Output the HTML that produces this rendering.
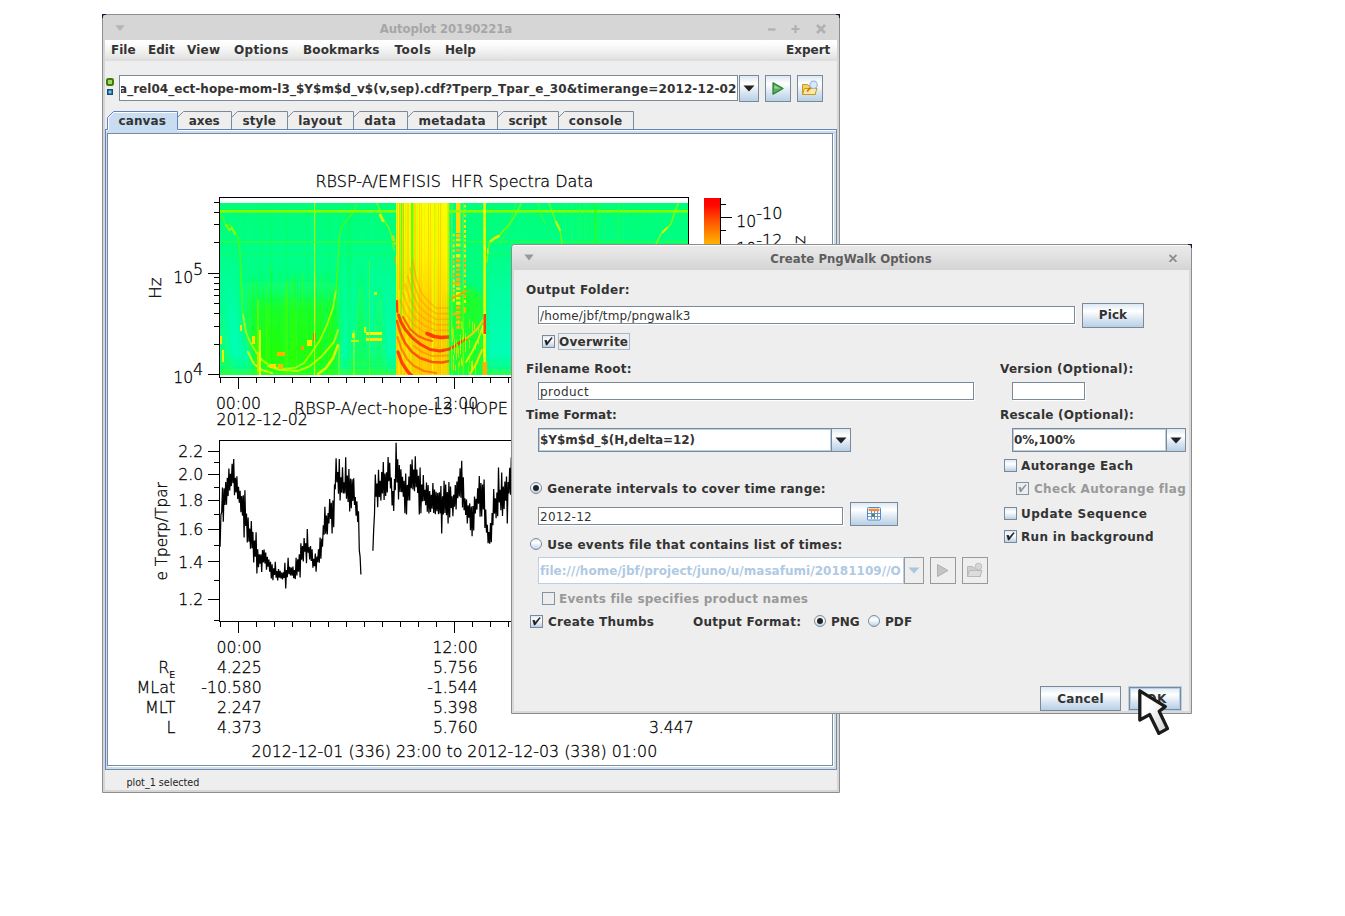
<!DOCTYPE html>
<html lang="en">
<head>
<meta charset="utf-8">
<title>Autoplot 20190221a - Create PngWalk Options</title>
<style>
html,body{margin:0;padding:0;background:#fff;}
body{width:1345px;height:916px;position:relative;overflow:hidden;font-family:"DejaVu Sans","Liberation Sans",sans-serif;font-size:12px;color:#333;}
.a{position:absolute;box-sizing:border-box;}
.t{position:absolute;white-space:nowrap;font-weight:bold;font-size:12px;line-height:14px;height:14px;color:#333;}
.r{font-weight:normal;}
.dis{color:#999;}
.win{position:absolute;box-sizing:border-box;background:#d6d6d6;border:1px solid #8e8e8e;}
.tf{position:absolute;box-sizing:border-box;background:#fff;border:1px solid #7a8a99;box-shadow:1px 1px 0 0 #fff;}
.cbx{position:absolute;box-sizing:border-box;background:#fff;border:1px solid #7a8a99;box-shadow:inset 0 0 0 1px #b8cfe5;}
.tf .t{font-weight:normal;}
.btn{position:absolute;box-sizing:border-box;border:1px solid #7a8a99;background:linear-gradient(#dde8f3 0%,#fff 30%,#fff 32%,#dde8f3 62%,#b8cfe5 100%);}
.btn.dis{border-color:#999;background:#eee;}
.cb{position:absolute;box-sizing:border-box;width:13px;height:13px;border:1px solid #7a8a99;background:linear-gradient(#dde8f3 0%,#fff 35%,#dde8f3 70%,#b8cfe5 100%);}
.cb.dis{border-color:#8493a2;background:#eee;}
.rb{position:absolute;box-sizing:border-box;width:12px;height:12px;border:1px solid #7a8a99;border-radius:50%;background:linear-gradient(#dde8f3 0%,#fff 35%,#dde8f3 70%,#b8cfe5 100%);}
.tab{position:absolute;box-sizing:border-box;top:111px;height:19px;}
.cv{font-family:"DejaVu Sans Light","DejaVu Sans","Liberation Sans",sans-serif;font-weight:200;}
</style>
</head>
<body>

<!-- ================= MAIN WINDOW ================= -->
<div class="win" id="mainwin" style="left:102px;top:14px;width:738px;height:779px;border-radius:3px 3px 0 0;">
</div>
<!-- corner marks -->
<svg class="a" style="left:102px;top:14px" width="4" height="4"><path d="M0 0 H4 V1 H2.2 Q1 1 1 2.2 V4 H0 Z" fill="#0c1c44"/></svg>
<svg class="a" style="left:836px;top:14px" width="4" height="4"><path d="M4 0 H0 V1 H1.8 Q3 1 3 2.2 V4 H4 Z" fill="#0c1c44"/></svg>
<!-- title bar -->
<svg class="a" style="left:115px;top:25px" width="10" height="7"><path d="M0.3 0.3 L9.7 0.3 L5 6 Z" fill="#b4b4b4"/></svg>
<div class="t" style="left:379px;top:22px;width:134px;text-align:center;color:#a6a6a6;font-size:13px;font-family:'DejaVu Sans Condensed','DejaVu Sans',sans-serif;letter-spacing:-0.1px;" id="maintitle">Autoplot 20190221a</div>
<svg class="a" style="left:764px;top:22px" width="70" height="14">
<path d="M4 7.5 H11.5" stroke="#b0b0b0" stroke-width="2.2" fill="none"/>
<path d="M27.5 7 H35.5 M31.5 3 V11" stroke="#b0b0b0" stroke-width="2.2" fill="none"/>
<path d="M53 3 L61 11 M61 3 L53 11" stroke="#b0b0b0" stroke-width="2.6" fill="none"/>
</svg>
<!-- menubar -->
<div class="a" style="left:105px;top:40px;width:732px;height:21px;background:linear-gradient(#fff 0%,#fdfdfd 20%,#e2e2e2 92%,#d0d0d0 96%,#f4f4f4 100%);"></div>
<div class="t" style="left:111px;top:43px">File</div>
<div class="t" style="left:148px;top:43px">Edit</div>
<div class="t" style="left:187px;top:43px;letter-spacing:0.2px">View</div>
<div class="t" style="left:234px;top:43px;letter-spacing:0.3px">Options</div>
<div class="t" style="left:303px;top:43px;letter-spacing:0.15px">Bookmarks</div>
<div class="t" style="left:394.5px;top:43px;letter-spacing:0.5px">Tools</div>
<div class="t" style="left:445px;top:43px">Help</div>
<div class="t" style="left:786px;top:43px">Expert</div>
<!-- content bg -->
<div class="a" style="left:105px;top:61px;width:732px;height:729px;background:#eee;"></div>

<!-- address bar -->
<svg class="a" style="left:106px;top:78px" width="9" height="21">
<rect x="1" y="1" width="6" height="6" rx="1.2" fill="#9ad86a" stroke="#3f7d06" stroke-width="2"/>
<rect x="1.75" y="11.75" width="4.5" height="4.5" fill="#7fbfe4" stroke="#0d507c" stroke-width="1.5"/>
</svg>
<div class="cbx" style="left:119px;top:75px;width:619px;height:26px;box-shadow:none;"></div>
<div class="a" style="left:121px;top:77px;width:616px;height:22px;overflow:hidden;"><div class="t" style="left:-2px;top:5px;letter-spacing:0.033px" id="uri">a_rel04_ect-hope-mom-l3_$Y$m$d_v$(v,sep).cdf?Tperp_<span style="letter-spacing:0.13px">Tpar_e_30&amp;timerange=2012-12-02</span></div></div>
<div class="btn" style="left:739px;top:75px;width:20px;height:27px;"></div>
<svg class="a" style="left:743px;top:85px" width="12" height="7"><path d="M0.5 0.5 H11.5 L6 6.5 Z" fill="#222"/></svg>
<div class="btn" style="left:765px;top:75px;width:26px;height:27px;"></div>
<svg class="a" style="left:771px;top:81px" width="14" height="15"><path d="M2 1.8 L12 7.5 L2 13.2 Z" fill="#58b058" stroke="#237d33" stroke-width="1.2" stroke-linejoin="round"/><path d="M3.4 4.2 L9 7.4 L3.4 7.4 Z" fill="#9ad89a"/></svg>
<div class="btn" style="left:797px;top:75px;width:26px;height:27px;"></div>
<svg class="a" style="left:801px;top:80px" width="18" height="17">
<path d="M1.5 4.5 h5 l1.5 1.5 h6.5 v8.5 h-13 z" fill="#f3d264" stroke="#c79a1e" stroke-width="1"/>
<path d="M3.5 8.5 h12.5 l-2 6 h-12.5 z" fill="#fbe9a0" stroke="#c79a1e" stroke-width="1"/>
<path d="M6 11.5 L10.5 6.5" stroke="#e0691a" stroke-width="1.8"/>
<circle cx="12.6" cy="4.8" r="3.7" fill="#d6e8fc" stroke="#a3b9d9" stroke-width="1.2"/>
</svg>


<!-- tabbed pane content border -->
<div class="a" style="left:105px;top:129px;width:732px;height:641px;background:#c8ddf2;border:1px solid #6382bf;border-right-color:#7a8a99;border-bottom-color:#7a8a99;"></div>
<div class="a" style="left:106px;top:130px;width:730px;height:1px;background:#fff;"></div>
<svg class="a" style="left:0;top:0" width="860" height="140" viewBox="0 0 860 140">
<path d="M107.5 133 V117.5 L113.5 111.5 H177.5 V131 H107.5 Z" fill="#c8ddf2"/>
<path d="M108.5 130 V118 L113.9 112.5 H177.0" fill="none" stroke="#fff" stroke-width="1"/>
<path d="M107.5 130 V117.5 L113.5 111.5 H177.5 V129.5" fill="none" stroke="#6382bf" stroke-width="1"/>
<path d="M178.0 129 V117.5 L183.5 111.5 H231.5 V129 Z" fill="#eeeeee"/>
<path d="M177.5 117.5 L183.5 111.5 H231.5 V129" fill="none" stroke="#7a8a99" stroke-width="1"/>
<path d="M232.0 129 V117.5 L237.5 111.5 H287.5 V129 Z" fill="#eeeeee"/>
<path d="M231.5 117.5 L237.5 111.5 H287.5 V129" fill="none" stroke="#7a8a99" stroke-width="1"/>
<path d="M288.0 129 V117.5 L293.5 111.5 H353.5 V129 Z" fill="#eeeeee"/>
<path d="M287.5 117.5 L293.5 111.5 H353.5 V129" fill="none" stroke="#7a8a99" stroke-width="1"/>
<path d="M354.0 129 V117.5 L359.5 111.5 H407.5 V129 Z" fill="#eeeeee"/>
<path d="M353.5 117.5 L359.5 111.5 H407.5 V129" fill="none" stroke="#7a8a99" stroke-width="1"/>
<path d="M408.0 129 V117.5 L413.5 111.5 H497.5 V129 Z" fill="#eeeeee"/>
<path d="M407.5 117.5 L413.5 111.5 H497.5 V129" fill="none" stroke="#7a8a99" stroke-width="1"/>
<path d="M498.0 129 V117.5 L503.5 111.5 H558.5 V129 Z" fill="#eeeeee"/>
<path d="M497.5 117.5 L503.5 111.5 H558.5 V129" fill="none" stroke="#7a8a99" stroke-width="1"/>
<path d="M559.0 129 V117.5 L564.5 111.5 H633.5 V129 Z" fill="#eeeeee"/>
<path d="M558.5 117.5 L564.5 111.5 H633.5 V129" fill="none" stroke="#7a8a99" stroke-width="1"/>
</svg>
<div class="t" style="left:107.2px;top:114px;width:70px;text-align:center;letter-spacing:0.10px">canvas</div>
<div class="t" style="left:177.2px;top:114px;width:54px;text-align:center">axes</div>
<div class="t" style="left:231.2px;top:114px;width:56px;text-align:center;letter-spacing:0.10px">style</div>
<div class="t" style="left:287.2px;top:114px;width:66px;text-align:center;letter-spacing:0.30px">layout</div>
<div class="t" style="left:353.2px;top:114px;width:54px;text-align:center;letter-spacing:0.30px">data</div>
<div class="t" style="left:407.2px;top:114px;width:90px;text-align:center;letter-spacing:0.30px">metadata</div>
<div class="t" style="left:497.2px;top:114px;width:61px;text-align:center">script</div>
<div class="t" style="left:558.2px;top:114px;width:75px;text-align:center;letter-spacing:0.30px">console</div>
<!-- canvas -->
<div class="a" style="left:107px;top:133px;width:726px;height:633px;background:#fff;border:1px solid #7a8a99;box-shadow:1px 1px 0 0 #fff;"></div>

<svg class="a" style="left:0;top:0" width="1345" height="916" viewBox="0 0 1345 916">
<defs><clipPath id="ccanvas"><rect x="108" y="134" width="724" height="631"/></clipPath><clipPath id="clp"><rect x="220" y="441" width="468" height="180"/></clipPath><clipPath id="cband"><rect x="396" y="203" width="53.5" height="172"/></clipPath></defs>
<g clip-path="url(#ccanvas)">
<defs>
<linearGradient id="gbase" x1="0" y1="0" x2="0" y2="1"><stop offset="0" stop-color="#02ff76"/><stop offset="0.3" stop-color="#00ff86"/><stop offset="0.55" stop-color="#00ffa2"/><stop offset="0.85" stop-color="#00ffb6"/><stop offset="0.94" stop-color="#06ff92"/><stop offset="1" stop-color="#2cff58"/></linearGradient>
<linearGradient id="gbowl" x1="0" y1="0" x2="0" y2="1"><stop offset="0" stop-color="#14ff28" stop-opacity="0"/><stop offset="0.35" stop-color="#14ff28" stop-opacity="0.55"/><stop offset="0.7" stop-color="#1cff08" stop-opacity="0.95"/><stop offset="1" stop-color="#2cff00" stop-opacity="1"/></linearGradient>
<linearGradient id="gyel" x1="0" y1="0" x2="0" y2="1"><stop offset="0" stop-color="#f8ff00"/><stop offset="0.3" stop-color="#fff400"/><stop offset="0.5" stop-color="#ffde00"/><stop offset="0.68" stop-color="#ffc800"/><stop offset="1" stop-color="#ffcc00"/></linearGradient>
<linearGradient id="gfade" x1="0" y1="0" x2="0" y2="1"><stop offset="0" stop-color="#fff" stop-opacity="1"/><stop offset="0.55" stop-color="#fff" stop-opacity="0.9"/><stop offset="0.8" stop-color="#fff" stop-opacity="0.25"/><stop offset="1" stop-color="#fff" stop-opacity="0.15"/></linearGradient>
<mask id="mfade"><rect x="390" y="203" width="70" height="172" fill="url(#gfade)"/></mask>
<filter id="b1" x="-20%" y="-20%" width="140%" height="140%"><feGaussianBlur stdDeviation="3"/></filter>
<filter id="b2" x="-30%" y="-30%" width="160%" height="160%"><feGaussianBlur stdDeviation="5"/></filter>
<filter id="b05" x="-20%" y="-20%" width="140%" height="140%"><feGaussianBlur stdDeviation="0.6"/></filter>
<clipPath id="cspec"><rect x="220" y="203" width="468" height="172"/></clipPath>
</defs>
<filter id="bsoft" x="-2%" y="-2%" width="104%" height="104%"><feGaussianBlur stdDeviation="0.45"/></filter>
<g clip-path="url(#cspec)">
<rect x="220" y="203" width="468" height="172" fill="url(#gbase)"/>
<g filter="url(#bsoft)">
<rect x="216" y="199" width="476" height="180" fill="url(#gbase)"/>
<rect x="317.1" y="203.0" width="2.0" height="172.0" fill="#00ffa0" opacity="0.16"/>
<rect x="241.7" y="203.0" width="4.0" height="172.0" fill="#10ff50" opacity="0.12"/>
<rect x="237.4" y="203.0" width="4.0" height="172.0" fill="#10ff50" opacity="0.08"/>
<rect x="350.1" y="203.0" width="2.0" height="172.0" fill="#10ff50" opacity="0.09"/>
<rect x="347.4" y="203.0" width="4.0" height="172.0" fill="#10ff50" opacity="0.19"/>
<rect x="409.2" y="203.0" width="4.0" height="172.0" fill="#10ff50" opacity="0.15"/>
<rect x="339.0" y="203.0" width="2.0" height="172.0" fill="#10ff50" opacity="0.15"/>
<rect x="260.0" y="203.0" width="3.0" height="172.0" fill="#10ff50" opacity="0.14"/>
<rect x="391.3" y="203.0" width="4.0" height="172.0" fill="#10ff50" opacity="0.09"/>
<rect x="391.4" y="203.0" width="2.0" height="172.0" fill="#00ffa0" opacity="0.09"/>
<rect x="433.6" y="203.0" width="4.0" height="172.0" fill="#10ff50" opacity="0.15"/>
<rect x="368.9" y="203.0" width="4.0" height="172.0" fill="#00ffa0" opacity="0.17"/>
<rect x="359.7" y="203.0" width="3.0" height="172.0" fill="#00ffa0" opacity="0.12"/>
<rect x="458.3" y="203.0" width="4.0" height="172.0" fill="#10ff50" opacity="0.09"/>
<rect x="310.1" y="203.0" width="3.0" height="172.0" fill="#00ffa0" opacity="0.17"/>
<rect x="306.4" y="203.0" width="2.0" height="172.0" fill="#10ff50" opacity="0.14"/>
<rect x="269.5" y="203.0" width="3.0" height="172.0" fill="#10ff50" opacity="0.19"/>
<rect x="346.5" y="203.0" width="4.0" height="172.0" fill="#10ff50" opacity="0.17"/>
<rect x="391.9" y="203.0" width="3.0" height="172.0" fill="#00ffa0" opacity="0.16"/>
<rect x="398.3" y="203.0" width="4.0" height="172.0" fill="#00ffa0" opacity="0.09"/>
<rect x="248.1" y="203.0" width="3.0" height="172.0" fill="#00ffa0" opacity="0.16"/>
<rect x="239.5" y="203.0" width="4.0" height="172.0" fill="#00ffa0" opacity="0.16"/>
<rect x="517.9" y="203.0" width="3.0" height="172.0" fill="#00ffa0" opacity="0.17"/>
<rect x="486.1" y="203.0" width="3.0" height="172.0" fill="#10ff50" opacity="0.19"/>
<rect x="326.6" y="203.0" width="4.0" height="172.0" fill="#10ff50" opacity="0.14"/>
<rect x="285.5" y="203.0" width="3.0" height="172.0" fill="#10ff50" opacity="0.17"/>
<path d="M240 262 L243 300 L246 330 L252 350 L262 375 L336 375 L339 330 L340 290 L341 262 Z" fill="url(#gbowl)" filter="url(#b2)"/>
<path d="M256 300 L262 375 L330 375 L334 300 Z" fill="#22ff08" opacity="0.55" filter="url(#b2)"/>
<rect x="283.0" y="338.1" width="1.0" height="36.9" fill="#00ff70" opacity="0.28"/>
<rect x="287.0" y="307.6" width="1.0" height="67.4" fill="#10ff20" opacity="0.54"/>
<rect x="325.0" y="285.1" width="1.0" height="89.9" fill="#00ff70" opacity="0.60"/>
<rect x="308.0" y="293.6" width="1.0" height="81.4" fill="#10ff20" opacity="0.30"/>
<rect x="263.0" y="281.3" width="1.0" height="93.7" fill="#10ff20" opacity="0.25"/>
<rect x="322.0" y="277.1" width="1.0" height="97.9" fill="#48ff00" opacity="0.25"/>
<rect x="285.0" y="292.6" width="1.0" height="82.4" fill="#48ff00" opacity="0.58"/>
<rect x="309.0" y="304.8" width="1.0" height="70.2" fill="#30ff00" opacity="0.41"/>
<rect x="325.0" y="341.0" width="1.0" height="34.0" fill="#00ff70" opacity="0.39"/>
<rect x="282.0" y="302.0" width="1.0" height="73.0" fill="#00ff70" opacity="0.27"/>
<rect x="253.0" y="279.3" width="1.0" height="95.7" fill="#10ff20" opacity="0.29"/>
<rect x="301.0" y="270.5" width="1.0" height="104.5" fill="#10ff20" opacity="0.44"/>
<rect x="332.0" y="312.9" width="1.0" height="62.1" fill="#30ff00" opacity="0.56"/>
<rect x="302.0" y="274.3" width="1.0" height="100.7" fill="#48ff00" opacity="0.58"/>
<rect x="301.0" y="301.4" width="1.0" height="73.6" fill="#30ff00" opacity="0.55"/>
<rect x="336.0" y="300.7" width="1.0" height="74.3" fill="#00ff70" opacity="0.36"/>
<rect x="260.0" y="324.2" width="1.0" height="50.8" fill="#48ff00" opacity="0.42"/>
<rect x="309.0" y="304.9" width="1.0" height="70.1" fill="#10ff20" opacity="0.58"/>
<rect x="295.0" y="274.2" width="1.0" height="100.8" fill="#30ff00" opacity="0.52"/>
<rect x="274.0" y="315.4" width="1.0" height="59.6" fill="#30ff00" opacity="0.49"/>
<rect x="271.0" y="292.4" width="1.0" height="82.6" fill="#10ff20" opacity="0.37"/>
<rect x="267.0" y="307.0" width="1.0" height="68.0" fill="#48ff00" opacity="0.47"/>
<rect x="302.0" y="327.4" width="1.0" height="47.6" fill="#10ff20" opacity="0.53"/>
<rect x="321.0" y="323.4" width="1.0" height="51.6" fill="#10ff20" opacity="0.32"/>
<rect x="291.0" y="322.7" width="1.0" height="52.3" fill="#30ff00" opacity="0.53"/>
<rect x="290.0" y="278.1" width="1.0" height="96.9" fill="#48ff00" opacity="0.41"/>
<rect x="331.0" y="344.0" width="1.0" height="31.0" fill="#48ff00" opacity="0.28"/>
<rect x="256.0" y="301.0" width="1.0" height="74.0" fill="#48ff00" opacity="0.32"/>
<rect x="303.0" y="336.7" width="1.0" height="38.3" fill="#30ff00" opacity="0.42"/>
<rect x="306.0" y="328.4" width="1.0" height="46.6" fill="#30ff00" opacity="0.54"/>
<rect x="258.0" y="294.2" width="1.0" height="80.8" fill="#10ff20" opacity="0.42"/>
<rect x="263.0" y="327.5" width="1.0" height="47.5" fill="#48ff00" opacity="0.28"/>
<rect x="332.0" y="321.9" width="1.0" height="53.1" fill="#00ff70" opacity="0.39"/>
<rect x="332.0" y="322.2" width="1.0" height="52.8" fill="#10ff20" opacity="0.60"/>
<rect x="249.0" y="311.0" width="1.0" height="64.0" fill="#00ff70" opacity="0.53"/>
<rect x="260.0" y="330.6" width="1.0" height="44.4" fill="#00ff70" opacity="0.48"/>
<rect x="279.0" y="307.5" width="1.0" height="67.5" fill="#10ff20" opacity="0.26"/>
<rect x="319.0" y="322.3" width="1.0" height="52.7" fill="#30ff00" opacity="0.43"/>
<rect x="331.0" y="298.0" width="1.0" height="77.0" fill="#10ff20" opacity="0.54"/>
<rect x="266.0" y="282.9" width="1.0" height="92.1" fill="#48ff00" opacity="0.43"/>
<rect x="316.0" y="289.1" width="1.0" height="85.9" fill="#00ff70" opacity="0.54"/>
<rect x="252.0" y="323.4" width="1.0" height="51.6" fill="#00ff70" opacity="0.48"/>
<rect x="320.0" y="304.9" width="1.0" height="70.1" fill="#10ff20" opacity="0.44"/>
<rect x="294.0" y="263.6" width="1.0" height="111.4" fill="#00ff70" opacity="0.52"/>
<rect x="302.0" y="326.4" width="1.0" height="48.6" fill="#10ff20" opacity="0.31"/>
<rect x="290.0" y="322.2" width="1.0" height="52.8" fill="#30ff00" opacity="0.36"/>
<rect x="294.0" y="308.1" width="1.0" height="66.9" fill="#30ff00" opacity="0.56"/>
<rect x="252.0" y="277.9" width="1.0" height="97.1" fill="#30ff00" opacity="0.52"/>
<rect x="293.0" y="308.6" width="1.0" height="66.4" fill="#30ff00" opacity="0.41"/>
<rect x="302.0" y="304.0" width="1.0" height="71.0" fill="#10ff20" opacity="0.49"/>
<rect x="288.0" y="306.3" width="1.0" height="68.7" fill="#00ff70" opacity="0.43"/>
<rect x="269.0" y="305.4" width="1.0" height="69.6" fill="#48ff00" opacity="0.57"/>
<rect x="327.0" y="278.8" width="1.0" height="96.2" fill="#00ff70" opacity="0.30"/>
<rect x="258.0" y="298.7" width="1.0" height="76.3" fill="#30ff00" opacity="0.48"/>
<rect x="286.0" y="279.7" width="1.0" height="95.3" fill="#48ff00" opacity="0.52"/>
<rect x="328.0" y="274.8" width="1.0" height="100.2" fill="#48ff00" opacity="0.30"/>
<rect x="326.0" y="342.3" width="1.0" height="32.7" fill="#10ff20" opacity="0.51"/>
<rect x="255.0" y="335.4" width="1.0" height="39.6" fill="#10ff20" opacity="0.60"/>
<rect x="322.0" y="275.4" width="1.0" height="99.6" fill="#00ff70" opacity="0.60"/>
<rect x="283.0" y="297.0" width="1.0" height="78.0" fill="#48ff00" opacity="0.36"/>
<rect x="312.0" y="263.6" width="1.0" height="111.4" fill="#00ff70" opacity="0.40"/>
<rect x="249.0" y="289.5" width="1.0" height="85.5" fill="#48ff00" opacity="0.43"/>
<rect x="253.0" y="343.8" width="1.0" height="31.2" fill="#10ff20" opacity="0.59"/>
<rect x="256.0" y="284.0" width="1.0" height="91.0" fill="#30ff00" opacity="0.57"/>
<rect x="263.0" y="324.7" width="1.0" height="50.3" fill="#00ff70" opacity="0.55"/>
<rect x="308.0" y="340.5" width="1.0" height="34.5" fill="#00ff70" opacity="0.30"/>
<rect x="330.0" y="309.4" width="1.0" height="65.6" fill="#48ff00" opacity="0.28"/>
<rect x="252.0" y="319.1" width="1.0" height="55.9" fill="#00ff70" opacity="0.56"/>
<rect x="271.0" y="263.4" width="1.0" height="111.6" fill="#30ff00" opacity="0.53"/>
<rect x="255.0" y="333.1" width="1.0" height="41.9" fill="#30ff00" opacity="0.34"/>
<rect x="258.0" y="263.0" width="1.0" height="112.0" fill="#00ff70" opacity="0.57"/>
<rect x="271.0" y="272.7" width="1.0" height="102.3" fill="#10ff20" opacity="0.58"/>
<rect x="334.0" y="283.7" width="1.0" height="91.3" fill="#10ff20" opacity="0.32"/>
<rect x="275.0" y="287.3" width="1.0" height="87.7" fill="#10ff20" opacity="0.35"/>
<rect x="292.0" y="276.8" width="1.0" height="98.2" fill="#48ff00" opacity="0.53"/>
<rect x="337.0" y="265.1" width="1.0" height="109.9" fill="#30ff00" opacity="0.51"/>
<rect x="297.0" y="277.7" width="1.0" height="97.3" fill="#00ff70" opacity="0.34"/>
<rect x="287.0" y="316.6" width="1.0" height="58.4" fill="#00ff70" opacity="0.48"/>
<rect x="296.0" y="335.8" width="1.0" height="39.2" fill="#48ff00" opacity="0.49"/>
<rect x="335.0" y="290.4" width="1.0" height="84.6" fill="#10ff20" opacity="0.39"/>
<rect x="278.0" y="266.5" width="1.0" height="108.5" fill="#10ff20" opacity="0.25"/>
<rect x="303.0" y="335.0" width="1.0" height="40.0" fill="#00ff70" opacity="0.31"/>
<rect x="255.0" y="331.8" width="1.0" height="43.2" fill="#48ff00" opacity="0.46"/>
<rect x="309.0" y="265.8" width="1.0" height="109.2" fill="#10ff20" opacity="0.31"/>
<rect x="287.0" y="283.8" width="1.0" height="91.2" fill="#48ff00" opacity="0.59"/>
<rect x="296.0" y="282.3" width="1.0" height="92.7" fill="#48ff00" opacity="0.33"/>
<rect x="263.0" y="289.8" width="1.0" height="85.2" fill="#30ff00" opacity="0.42"/>
<rect x="292.0" y="278.7" width="1.0" height="96.3" fill="#30ff00" opacity="0.28"/>
<rect x="321.0" y="273.9" width="1.0" height="101.1" fill="#30ff00" opacity="0.39"/>
<rect x="274.0" y="314.3" width="1.0" height="60.7" fill="#30ff00" opacity="0.45"/>
<path d="M220 280 L225 330 L232 375 L220 375 Z" fill="#20ff30" opacity="0.55" filter="url(#b1)"/>
<path d="M350 375 L357 300 L361 262 L365 300 L372 375 Z" fill="#1cff30" opacity="0.6" filter="url(#b1)"/>
<path d="M371 375 L376 300 L379 280 L382 300 L387 375 Z" fill="#1cff30" opacity="0.5" filter="url(#b1)"/>
<rect x="220.0" y="363.0" width="176.0" height="1.8" fill="#30ff50" opacity="0.30"/>
<rect x="486.0" y="363.0" width="60.0" height="1.8" fill="#30ff50" opacity="0.30"/>
<rect x="220.0" y="366.5" width="176.0" height="1.8" fill="#00ffa8" opacity="0.25"/>
<rect x="486.0" y="366.5" width="60.0" height="1.8" fill="#00ffa8" opacity="0.25"/>
<rect x="220.0" y="369.0" width="176.0" height="1.8" fill="#48ff30" opacity="0.40"/>
<rect x="486.0" y="369.0" width="60.0" height="1.8" fill="#48ff30" opacity="0.40"/>
<rect x="220.0" y="372.0" width="176.0" height="1.8" fill="#40ff20" opacity="0.55"/>
<rect x="486.0" y="372.0" width="60.0" height="1.8" fill="#40ff20" opacity="0.55"/>
<path d="M221.0 213.0 L224.0 221.0 L227.0 227.0 L230.0 224.0 L233.0 230.0 L236.0 233.0 L238.0 238.0 L240.0 252.0 L241.0 280.0 L243.0 315.0" fill="none" stroke="#58ff00" stroke-width="1.6" opacity="0.75" stroke-linejoin="round" stroke-linecap="round"/>
<path d="M226.0 225.0 L229.0 230.0 L232.0 228.0 L235.0 234.0" fill="none" stroke="#a0ff00" stroke-width="2.2" opacity="0.80" stroke-linejoin="round" stroke-linecap="round"/>
<path d="M243.0 315.0 L246.0 332.0 L250.0 342.0 L256.0 352.0 L262.0 360.0 L270.0 366.0 L282.0 369.0 L295.0 368.0 L304.0 363.0 L312.0 352.0 L320.0 340.0 L327.0 325.0 L333.0 308.0 L336.0 290.0" fill="none" stroke="#b8ff00" stroke-width="1.8" opacity="0.90" stroke-linejoin="round" stroke-linecap="round"/>
<path d="M336.0 290.0 L338.0 262.0 L339.0 240.0 L341.0 228.0 L346.0 221.0 L352.0 214.0 L357.0 205.0" fill="none" stroke="#58ff00" stroke-width="1.5" opacity="0.75" stroke-linejoin="round" stroke-linecap="round"/>
<path d="M248.0 352.0 L254.0 364.0 L262.0 370.0 L272.0 373.0" fill="none" stroke="#d8ff00" stroke-width="2.0" opacity="0.90" stroke-linejoin="round" stroke-linecap="round"/>
<path d="M268.0 366.0 L280.0 370.0 L298.0 371.0 L310.0 366.0 L322.0 356.0 L334.0 342.0 L338.0 330.0" fill="none" stroke="#c8ff00" stroke-width="2.0" opacity="0.85" stroke-linejoin="round" stroke-linecap="round"/>
<path d="M318.0 374.0 L326.0 368.0 L333.0 358.0 L338.0 345.0" fill="none" stroke="#f0f000" stroke-width="2.6" opacity="0.90" stroke-linejoin="round" stroke-linecap="round"/>
<rect x="252.0" y="336.0" width="3.0" height="8.0" fill="#ffe000" filter="url(#b05)"/>
<rect x="257.0" y="352.0" width="3.0" height="20.0" fill="#ffd000" filter="url(#b05)"/>
<rect x="259.0" y="330.0" width="2.0" height="45.0" fill="#e0ff00" filter="url(#b05)"/>
<rect x="277.0" y="352.0" width="8.0" height="4.0" fill="#ffb000" filter="url(#b05)"/>
<rect x="270.0" y="364.0" width="6.0" height="4.0" fill="#ffe000" filter="url(#b05)"/>
<rect x="278.0" y="364.0" width="5.0" height="5.0" fill="#ffb800" filter="url(#b05)"/>
<rect x="301.0" y="346.0" width="3.0" height="4.0" fill="#ffa000" filter="url(#b05)"/>
<rect x="307.0" y="340.0" width="5.0" height="6.0" fill="#ffe800" filter="url(#b05)"/>
<rect x="313.0" y="333.0" width="3.0" height="8.0" fill="#ff7000" filter="url(#b05)"/>
<rect x="240.0" y="325.0" width="2.0" height="6.0" fill="#ffe000" filter="url(#b05)"/>
<rect x="220.0" y="336.0" width="2.0" height="8.0" fill="#ffe000" filter="url(#b05)"/>
<rect x="222.0" y="350.0" width="2.0" height="12.0" fill="#f0f000" filter="url(#b05)"/>
<rect x="314.0" y="203.0" width="1.2" height="172.0" fill="#b4ff00"/>
<rect x="314.0" y="275.0" width="1.2" height="50.0" fill="#ffe000" opacity="0.70"/>
<rect x="257.5" y="300.0" width="1.2" height="75.0" fill="#90ff00" opacity="0.80"/>
<path d="M377.0 203.0 L381.0 214.0 L385.0 222.0 L389.0 228.0 L392.0 238.0 L394.0 250.0" fill="none" stroke="#80ff00" stroke-width="1.4" opacity="0.85" stroke-linejoin="round" stroke-linecap="round"/>
<path d="M380.0 215.0 L383.0 221.0" fill="none" stroke="#f0f000" stroke-width="2.5" opacity="0.90" stroke-linejoin="round" stroke-linecap="round"/>
<path d="M393.0 236.0 L395.0 244.0" fill="none" stroke="#ffd000" stroke-width="1.8" opacity="0.90" stroke-linejoin="round" stroke-linecap="round"/>
<rect x="395.0" y="257.0" width="1.4" height="6.0" fill="#ffa000"/>
<rect x="352.0" y="333.0" width="3.0" height="5.0" fill="#e8f000" filter="url(#b05)"/>
<rect x="351.0" y="340.0" width="8.0" height="2.0" fill="#c0ff00" filter="url(#b05)"/>
<rect x="366.0" y="332.0" width="16.0" height="3.0" fill="#fff000" filter="url(#b05)"/>
<rect x="366.0" y="338.0" width="16.0" height="3.0" fill="#ffe000" filter="url(#b05)"/>
<rect x="364.0" y="327.0" width="2.0" height="6.0" fill="#e0f000" filter="url(#b05)"/>
<rect x="374.0" y="292.0" width="3.0" height="3.0" fill="#c0ff00" filter="url(#b05)"/>
<rect x="353.5" y="330.0" width="1.0" height="45.0" fill="#d0ff00" opacity="0.80"/>
<rect x="338.5" y="345.0" width="1.0" height="30.0" fill="#d0ff00" opacity="0.70"/>
<rect x="369.0" y="260.0" width="1.0" height="115.0" fill="#60ff20" opacity="0.70"/>
<rect x="396.0" y="203.0" width="53.5" height="172.0" fill="url(#gyel)"/>
<g mask="url(#mfade)">
<rect x="397.0" y="203.0" width="1.0" height="172.0" fill="#a0ff00" opacity="0.90"/>
<rect x="399.0" y="203.0" width="1.0" height="172.0" fill="#ffb000" opacity="0.80"/>
<rect x="400.5" y="203.0" width="2.0" height="172.0" fill="#50ff10" opacity="0.90"/>
<rect x="403.0" y="203.0" width="1.0" height="172.0" fill="#ffa800" opacity="0.80"/>
<rect x="405.0" y="203.0" width="1.5" height="172.0" fill="#c8ff00" opacity="0.90"/>
<rect x="407.5" y="203.0" width="1.0" height="172.0" fill="#ffb800" opacity="0.80"/>
<rect x="411.0" y="203.0" width="2.5" height="172.0" fill="#48ff10" opacity="0.90"/>
<rect x="414.5" y="203.0" width="1.0" height="172.0" fill="#ffb000" opacity="0.80"/>
<rect x="416.5" y="203.0" width="1.5" height="172.0" fill="#d0ff00" opacity="0.90"/>
<rect x="434.5" y="203.0" width="2.0" height="172.0" fill="#d8ff00" opacity="0.90"/>
<rect x="447.5" y="203.0" width="1.5" height="172.0" fill="#90ff00" opacity="0.90"/>
</g>
<rect x="419.0" y="203.0" width="1.0" height="172.0" fill="#ffa800" opacity="0.46"/>
<rect x="421.0" y="203.0" width="1.0" height="172.0" fill="#ffa800" opacity="0.32"/>
<rect x="424.0" y="203.0" width="1.0" height="172.0" fill="#ffd000" opacity="0.24"/>
<rect x="428.0" y="203.0" width="1.0" height="172.0" fill="#ffa800" opacity="0.39"/>
<rect x="430.0" y="203.0" width="1.0" height="172.0" fill="#ffa800" opacity="0.39"/>
<rect x="434.0" y="203.0" width="1.0" height="172.0" fill="#ffa800" opacity="0.24"/>
<rect x="438.0" y="203.0" width="1.0" height="172.0" fill="#ffa800" opacity="0.37"/>
<rect x="440.0" y="203.0" width="1.0" height="172.0" fill="#ffa800" opacity="0.44"/>
<rect x="444.0" y="203.0" width="1.0" height="172.0" fill="#ffff00" opacity="0.23"/>
<rect x="446.0" y="203.0" width="1.0" height="172.0" fill="#ffff00" opacity="0.39"/>
<rect x="448.0" y="203.0" width="1.0" height="172.0" fill="#ffd000" opacity="0.45"/>
<rect x="432.0" y="203.0" width="1.6" height="172.0" fill="#f0ff00" opacity="0.70"/>
<rect x="441.0" y="203.0" width="1.2" height="172.0" fill="#d8ff00" opacity="0.60"/>
<rect x="398.0" y="290.0" width="2.0" height="85.0" fill="#fff200" opacity="0.55"/>
<rect x="402.0" y="290.0" width="1.5" height="85.0" fill="#fff200" opacity="0.55"/>
<rect x="406.0" y="290.0" width="2.5" height="85.0" fill="#fff200" opacity="0.55"/>
<rect x="410.0" y="290.0" width="1.5" height="85.0" fill="#fff200" opacity="0.55"/>
<g clip-path="url(#cband)">
<path d="M400.0 300.0 L406.0 314.0 L414.0 325.0 L424.0 332.0 L436.0 336.0 L449.5 336.0" fill="none" stroke="#ff9000" stroke-width="1.6" opacity="0.45" stroke-linejoin="round" stroke-linecap="round"/>
<path d="M402.5 292.0 L408.0 306.8 L415.5 318.6 L425.0 326.0 L436.0 330.4 L449.5 330.4" fill="none" stroke="#ff9000" stroke-width="1.6" opacity="0.45" stroke-linejoin="round" stroke-linecap="round"/>
<path d="M405.0 284.0 L410.0 299.6 L417.0 312.2 L426.0 320.0 L436.0 324.8 L449.5 324.8" fill="none" stroke="#ff9000" stroke-width="1.6" opacity="0.45" stroke-linejoin="round" stroke-linecap="round"/>
<path d="M407.5 276.0 L412.0 292.4 L418.5 305.8 L427.0 314.0 L436.0 319.2 L449.5 319.2" fill="none" stroke="#ff9000" stroke-width="1.6" opacity="0.45" stroke-linejoin="round" stroke-linecap="round"/>
<path d="M410.0 268.0 L414.0 285.2 L420.0 299.4 L428.0 308.0 L436.0 313.6 L449.5 313.6" fill="none" stroke="#ff9000" stroke-width="1.6" opacity="0.45" stroke-linejoin="round" stroke-linecap="round"/>
<path d="M412.5 260.0 L416.0 278.0 L421.5 293.0 L429.0 302.0 L436.0 308.0 L449.5 308.0" fill="none" stroke="#ff9000" stroke-width="1.6" opacity="0.45" stroke-linejoin="round" stroke-linecap="round"/>
<path d="M397.0 301.0 L397.3 312.0" fill="none" stroke="#ff2800" stroke-width="2.2" opacity="0.90" stroke-linejoin="round" stroke-linecap="round"/>
<path d="M398.5 315.0 L401.0 322.0 L405.0 329.0 L412.0 337.5 L420.0 344.0 L430.0 349.5 L440.0 351.0 L449.5 349.0" fill="none" stroke="#ff3000" stroke-width="3.0" opacity="0.90" stroke-linejoin="round" stroke-linecap="round"/>
<path d="M403.0 317.0 L410.0 329.0 L418.0 336.0 L426.0 339.5 L432.0 341.0" fill="none" stroke="#ff5000" stroke-width="2.0" opacity="0.85" stroke-linejoin="round" stroke-linecap="round"/>
<path d="M427.0 333.5 L434.0 336.5 L441.0 337.5 L449.5 337.0" fill="none" stroke="#ff2c00" stroke-width="3.6" opacity="0.90" stroke-linejoin="round" stroke-linecap="round"/>
<path d="M397.0 321.0 L400.0 332.0 L405.0 343.0 L412.0 352.0 L420.0 358.0 L432.0 362.0 L442.0 362.5 L449.5 361.0" fill="none" stroke="#ff4800" stroke-width="2.6" opacity="0.90" stroke-linejoin="round" stroke-linecap="round"/>
<path d="M397.5 337.0 L401.0 348.0 L407.0 359.0 L414.0 366.0 L424.0 371.0 L436.0 373.0" fill="none" stroke="#ff6a00" stroke-width="2.0" opacity="0.80" stroke-linejoin="round" stroke-linecap="round"/>
<path d="M398.0 352.0 L402.0 363.0 L408.0 372.0 L412.0 376.0" fill="none" stroke="#ff3000" stroke-width="3.2" opacity="0.90" stroke-linejoin="round" stroke-linecap="round"/>
<path d="M414.0 346.0 L422.0 352.0 L432.0 356.0 L449.5 355.5" fill="none" stroke="#ff8000" stroke-width="1.8" opacity="0.60" stroke-linejoin="round" stroke-linecap="round"/>
</g>
<rect x="449.5" y="203.0" width="35.0" height="172.0" fill="#02ff7a" opacity="0.90"/>
<path d="M450 375 L450 296 L466 286 L484 296 L484 375 Z" fill="#2cff10" opacity="0.7" filter="url(#b1)"/>
<rect x="456.0" y="203.0" width="4.5" height="30.0" fill="#ffd800"/>
<rect x="451.4" y="203.0" width="1.0" height="172.0" fill="#c0ff00" opacity="0.50"/>
<rect x="452.8" y="234.0" width="2.0" height="2.4" fill="#ffe000"/>
<rect x="452.8" y="239.4" width="2.0" height="3.4" fill="#ffc800"/>
<rect x="452.8" y="244.4" width="2.0" height="3.0" fill="#ffe000"/>
<rect x="452.8" y="249.4" width="2.0" height="2.4" fill="#ffe000"/>
<rect x="452.8" y="254.8" width="2.0" height="3.4" fill="#ffe000"/>
<rect x="452.8" y="260.2" width="2.0" height="3.4" fill="#ffb000"/>
<rect x="452.8" y="265.2" width="2.0" height="2.4" fill="#f0ff00"/>
<rect x="452.8" y="269.8" width="2.0" height="3.4" fill="#ffc800"/>
<rect x="452.8" y="274.4" width="2.0" height="3.4" fill="#ffb000"/>
<rect x="452.8" y="279.4" width="2.0" height="3.0" fill="#ffe000"/>
<rect x="452.8" y="284.4" width="2.0" height="3.4" fill="#f0ff00"/>
<rect x="452.8" y="289.0" width="2.0" height="3.4" fill="#ffc800"/>
<rect x="452.8" y="293.6" width="2.0" height="3.4" fill="#ffc800"/>
<rect x="452.8" y="298.6" width="2.0" height="3.0" fill="#f0ff00"/>
<rect x="456.0" y="234.0" width="4.5" height="3.4" fill="#ffc800"/>
<rect x="456.0" y="238.6" width="4.5" height="3.0" fill="#ffe000"/>
<rect x="456.0" y="243.6" width="4.5" height="3.0" fill="#ffe000"/>
<rect x="456.0" y="249.0" width="4.5" height="2.4" fill="#ffb000"/>
<rect x="456.0" y="254.0" width="4.5" height="3.4" fill="#f0ff00"/>
<rect x="456.0" y="259.0" width="4.5" height="3.0" fill="#ffb000"/>
<rect x="456.0" y="263.6" width="4.5" height="3.4" fill="#ffc800"/>
<rect x="456.0" y="268.6" width="4.5" height="2.4" fill="#ffb000"/>
<rect x="456.0" y="273.2" width="4.5" height="3.0" fill="#ffb000"/>
<rect x="456.0" y="277.8" width="4.5" height="3.4" fill="#ffb000"/>
<rect x="456.0" y="282.8" width="4.5" height="3.0" fill="#ffc800"/>
<rect x="456.0" y="287.4" width="4.5" height="2.4" fill="#ffe000"/>
<rect x="456.0" y="292.0" width="4.5" height="3.4" fill="#f0ff00"/>
<rect x="456.0" y="297.0" width="4.5" height="2.4" fill="#f0ff00"/>
<rect x="456.0" y="301.6" width="4.5" height="3.4" fill="#f0ff00"/>
<rect x="456.0" y="306.2" width="4.5" height="3.0" fill="#ffb000"/>
<rect x="456.0" y="311.2" width="4.5" height="2.4" fill="#ffc800"/>
<rect x="456.0" y="315.8" width="4.5" height="3.0" fill="#ffb000"/>
<rect x="456.0" y="320.8" width="4.5" height="3.0" fill="#ffc800"/>
<rect x="456.0" y="325.8" width="4.5" height="3.0" fill="#ffb000"/>
<rect x="462.6" y="203.0" width="1.0" height="172.0" fill="#c0ff00" opacity="0.50"/>
<rect x="464.0" y="205.0" width="2.0" height="2.4" fill="#f0ff00"/>
<rect x="464.0" y="209.6" width="2.0" height="3.0" fill="#f0ff00"/>
<rect x="464.0" y="214.6" width="2.0" height="2.4" fill="#ffc800"/>
<rect x="464.0" y="220.0" width="2.0" height="2.4" fill="#f0ff00"/>
<rect x="464.0" y="225.0" width="2.0" height="3.0" fill="#ffe000"/>
<rect x="464.0" y="230.0" width="2.0" height="3.0" fill="#ffe000"/>
<rect x="464.0" y="235.0" width="2.0" height="3.0" fill="#f0ff00"/>
<rect x="464.0" y="239.6" width="2.0" height="3.0" fill="#ffe000"/>
<rect x="464.0" y="244.2" width="2.0" height="3.4" fill="#f0ff00"/>
<rect x="464.0" y="249.6" width="2.0" height="2.4" fill="#ffc800"/>
<rect x="464.0" y="254.6" width="2.0" height="3.0" fill="#f0ff00"/>
<rect x="464.0" y="259.2" width="2.0" height="3.0" fill="#ffb000"/>
<rect x="464.0" y="263.8" width="2.0" height="3.4" fill="#ffb000"/>
<rect x="464.0" y="269.2" width="2.0" height="3.4" fill="#ffc800"/>
<rect x="464.0" y="274.6" width="2.0" height="2.4" fill="#ffe000"/>
<rect x="464.0" y="280.0" width="2.0" height="3.0" fill="#ffb000"/>
<rect x="464.0" y="285.4" width="2.0" height="2.4" fill="#f0ff00"/>
<rect x="464.0" y="290.4" width="2.0" height="2.4" fill="#ffc800"/>
<rect x="464.0" y="295.0" width="2.0" height="3.0" fill="#ffb000"/>
<rect x="464.0" y="300.0" width="2.0" height="3.0" fill="#f0ff00"/>
<path d="M452.0 298.0 L458.0 295.5 L466.0 291.0" fill="none" stroke="#ffa000" stroke-width="2.4" opacity="0.90" stroke-linejoin="round" stroke-linecap="round"/>
<path d="M454.0 283.5 L459.0 283.5" fill="none" stroke="#ffb000" stroke-width="2.6" opacity="0.90" stroke-linejoin="round" stroke-linecap="round"/>
<path d="M454.0 314.0 L459.0 313.0" fill="none" stroke="#ffb000" stroke-width="2.8" opacity="0.90" stroke-linejoin="round" stroke-linecap="round"/>
<path d="M465.0 308.0 L465.0 312.0" fill="none" stroke="#ffc000" stroke-width="2.0" opacity="0.90" stroke-linejoin="round" stroke-linecap="round"/>
<path d="M449.5 349.0 L456.0 345.5 L462.0 341.0 L466.5 338.5" fill="none" stroke="#ff4000" stroke-width="3.0" opacity="0.90" stroke-linejoin="round" stroke-linecap="round"/>
<path d="M466.5 338.5 L472.0 334.0 L478.0 328.0 L483.0 320.0" fill="none" stroke="#ffd000" stroke-width="2.0" opacity="0.90" stroke-linejoin="round" stroke-linecap="round"/>
<rect x="475.0" y="364.9" width="1.0" height="7.9" fill="#fff000" opacity="0.75"/>
<rect x="460.0" y="344.8" width="1.0" height="9.3" fill="#fff000" opacity="0.75"/>
<rect x="472.0" y="321.6" width="1.0" height="10.5" fill="#ffd000" opacity="0.75"/>
<rect x="469.0" y="339.7" width="1.0" height="8.7" fill="#ffd000" opacity="0.75"/>
<rect x="465.0" y="344.3" width="1.0" height="7.7" fill="#fff000" opacity="0.75"/>
<rect x="462.0" y="322.4" width="1.0" height="7.6" fill="#90ff00" opacity="0.75"/>
<rect x="478.0" y="327.7" width="1.0" height="5.2" fill="#ffd000" opacity="0.75"/>
<rect x="463.0" y="353.8" width="1.0" height="7.3" fill="#90ff00" opacity="0.75"/>
<rect x="461.0" y="321.0" width="1.0" height="8.1" fill="#90ff00" opacity="0.75"/>
<rect x="454.0" y="342.2" width="1.0" height="11.9" fill="#fff000" opacity="0.75"/>
<rect x="453.0" y="361.0" width="1.0" height="9.2" fill="#ffd000" opacity="0.75"/>
<rect x="465.0" y="333.0" width="1.0" height="14.0" fill="#d0ff00" opacity="0.75"/>
<rect x="454.0" y="338.4" width="1.0" height="13.4" fill="#ffd000" opacity="0.75"/>
<rect x="483.0" y="341.5" width="1.0" height="5.8" fill="#ffd000" opacity="0.75"/>
<rect x="483.0" y="329.9" width="1.0" height="6.2" fill="#fff000" opacity="0.75"/>
<rect x="455.0" y="364.7" width="1.0" height="6.2" fill="#ffd000" opacity="0.75"/>
<rect x="453.0" y="355.3" width="1.0" height="5.0" fill="#fff000" opacity="0.75"/>
<rect x="458.0" y="362.2" width="1.0" height="12.1" fill="#90ff00" opacity="0.75"/>
<rect x="483.0" y="348.1" width="1.0" height="10.8" fill="#ffd000" opacity="0.75"/>
<rect x="474.0" y="323.4" width="1.0" height="5.8" fill="#fff000" opacity="0.75"/>
<rect x="463.0" y="328.7" width="1.0" height="11.6" fill="#d0ff00" opacity="0.75"/>
<rect x="468.0" y="365.8" width="1.0" height="8.1" fill="#90ff00" opacity="0.75"/>
<rect x="472.0" y="360.4" width="1.0" height="10.2" fill="#fff000" opacity="0.75"/>
<rect x="469.0" y="319.4" width="1.0" height="9.5" fill="#90ff00" opacity="0.75"/>
<rect x="452.0" y="327.3" width="1.0" height="14.7" fill="#ffd000" opacity="0.75"/>
<rect x="453.0" y="328.9" width="1.0" height="9.7" fill="#90ff00" opacity="0.75"/>
<rect x="458.0" y="319.6" width="1.0" height="8.7" fill="#ffd000" opacity="0.75"/>
<rect x="462.0" y="337.0" width="1.0" height="5.1" fill="#90ff00" opacity="0.75"/>
<rect x="475.0" y="342.2" width="1.0" height="7.3" fill="#fff000" opacity="0.75"/>
<rect x="461.0" y="357.4" width="1.0" height="7.5" fill="#fff000" opacity="0.75"/>
<rect x="459.0" y="360.7" width="1.0" height="6.2" fill="#ffd000" opacity="0.75"/>
<rect x="471.0" y="361.0" width="1.0" height="10.3" fill="#d0ff00" opacity="0.75"/>
<rect x="482.0" y="325.0" width="1.0" height="9.3" fill="#fff000" opacity="0.75"/>
<rect x="451.0" y="346.6" width="1.0" height="9.6" fill="#d0ff00" opacity="0.75"/>
<rect x="456.0" y="339.6" width="1.0" height="12.8" fill="#90ff00" opacity="0.75"/>
<rect x="475.0" y="365.9" width="1.0" height="15.2" fill="#90ff00" opacity="0.75"/>
<rect x="456.0" y="349.3" width="1.0" height="10.8" fill="#ffd000" opacity="0.75"/>
<rect x="451.0" y="349.9" width="1.0" height="9.2" fill="#90ff00" opacity="0.75"/>
<rect x="483.0" y="339.2" width="1.0" height="6.2" fill="#d0ff00" opacity="0.75"/>
<rect x="460.0" y="334.9" width="1.0" height="15.5" fill="#d0ff00" opacity="0.75"/>
<rect x="469.0" y="354.4" width="1.0" height="9.2" fill="#90ff00" opacity="0.75"/>
<rect x="478.0" y="338.8" width="1.0" height="5.5" fill="#ffd000" opacity="0.75"/>
<rect x="457.0" y="344.0" width="1.0" height="9.9" fill="#90ff00" opacity="0.75"/>
<rect x="462.0" y="361.1" width="1.0" height="5.3" fill="#ffd000" opacity="0.75"/>
<rect x="458.0" y="348.0" width="1.0" height="9.5" fill="#ffd000" opacity="0.75"/>
<rect x="451.0" y="321.0" width="1.0" height="15.1" fill="#90ff00" opacity="0.75"/>
<path d="M466.0 362.0 L472.0 352.0 L478.0 340.0 L483.0 326.0" fill="none" stroke="#e8ff00" stroke-width="1.8" opacity="0.90" stroke-linejoin="round" stroke-linecap="round"/>
<path d="M470.0 374.0 L476.0 364.0 L482.0 350.0" fill="none" stroke="#ffe000" stroke-width="2.0" opacity="0.90" stroke-linejoin="round" stroke-linecap="round"/>
<rect x="220.0" y="210.0" width="176.0" height="2.6" fill="#86ff00"/>
<rect x="449.5" y="210.0" width="238.5" height="2.6" fill="#86ff00"/>
<rect x="220.0" y="241.0" width="176.0" height="1.6" fill="#2cff3c" opacity="0.85"/>
<rect x="449.5" y="241.0" width="238.5" height="1.6" fill="#2cff3c" opacity="0.85"/>
<rect x="220.0" y="254.0" width="176.0" height="1.2" fill="#1cff54" opacity="0.55"/>
<rect x="486.0" y="254.0" width="202.0" height="1.2" fill="#1cff54" opacity="0.55"/>
<rect x="483.3" y="203.0" width="2.6" height="172.0" fill="#ecff00"/>
<rect x="483.5" y="314.0" width="2.5" height="20.0" fill="#ff4000"/>
<rect x="482.5" y="362.0" width="4.5" height="13.0" fill="#ffb000"/>
<path d="M487.0 262.0 L488.0 250.0 L490.0 241.0 L494.0 238.0 L499.0 236.0 L503.0 231.0 L508.0 226.0 L513.0 219.0 L517.0 212.0 L521.0 204.0" fill="none" stroke="#80ff00" stroke-width="1.5" opacity="0.90" stroke-linejoin="round" stroke-linecap="round"/>
<path d="M491.0 241.0 L495.0 238.0 L499.0 236.0" fill="none" stroke="#e8f000" stroke-width="2.6" opacity="0.90" stroke-linejoin="round" stroke-linecap="round"/>
<rect x="487.0" y="248.0" width="1.5" height="6.0" fill="#e0f000"/>
<path d="M549.0 203.0 L553.0 214.0 L556.0 222.0 L560.0 230.0 L562.0 244.0" fill="none" stroke="#80ff00" stroke-width="1.4" opacity="0.85" stroke-linejoin="round" stroke-linecap="round"/>
<path d="M556.0 222.0 L560.0 230.0" fill="none" stroke="#d0ff00" stroke-width="2.2" opacity="0.90" stroke-linejoin="round" stroke-linecap="round"/>
<path d="M538.0 203.0 L541.0 214.0 L545.0 224.0" fill="none" stroke="#50ff20" stroke-width="1.2" opacity="0.70" stroke-linejoin="round" stroke-linecap="round"/>
<path d="M500.0 244.0 L505.0 234.0 L510.0 224.0 L514.0 210.0 L516.0 203.0" fill="none" stroke="#50ff20" stroke-width="1.2" opacity="0.60" stroke-linejoin="round" stroke-linecap="round"/>
<path d="M656.0 244.0 L662.0 232.0 L667.0 228.0 L671.0 224.0 L674.0 214.0 L678.0 204.0" fill="none" stroke="#90ff00" stroke-width="1.5" opacity="0.90" stroke-linejoin="round" stroke-linecap="round"/>
<path d="M663.0 232.0 L667.0 228.0" fill="none" stroke="#e0f000" stroke-width="2.2" opacity="0.90" stroke-linejoin="round" stroke-linecap="round"/>
<rect x="594.0" y="203.0" width="2.5" height="45.0" fill="#20ff20" opacity="0.80"/>
<rect x="576.0" y="203.0" width="1.0" height="45.0" fill="#20ff40" opacity="0.28"/>
<rect x="587.0" y="203.0" width="2.0" height="45.0" fill="#20ff40" opacity="0.18"/>
<rect x="636.0" y="203.0" width="1.0" height="45.0" fill="#20ff40" opacity="0.17"/>
<rect x="617.0" y="203.0" width="2.0" height="45.0" fill="#20ff40" opacity="0.29"/>
<rect x="584.0" y="203.0" width="1.0" height="45.0" fill="#20ff40" opacity="0.12"/>
<rect x="579.0" y="203.0" width="2.0" height="45.0" fill="#20ff40" opacity="0.25"/>
<rect x="597.0" y="203.0" width="2.0" height="45.0" fill="#20ff40" opacity="0.26"/>
<rect x="633.0" y="203.0" width="2.0" height="45.0" fill="#20ff40" opacity="0.14"/>
<rect x="600.0" y="203.0" width="1.0" height="45.0" fill="#20ff40" opacity="0.26"/>
<rect x="619.0" y="203.0" width="1.0" height="45.0" fill="#20ff40" opacity="0.23"/>
<rect x="586.0" y="203.0" width="2.0" height="45.0" fill="#20ff40" opacity="0.20"/>
<rect x="623.0" y="203.0" width="1.0" height="45.0" fill="#20ff40" opacity="0.21"/>
<rect x="591.0" y="203.0" width="1.0" height="45.0" fill="#20ff40" opacity="0.16"/>
<rect x="565.0" y="203.0" width="1.0" height="45.0" fill="#20ff40" opacity="0.21"/>
<rect x="604.0" y="203.0" width="1.0" height="45.0" fill="#20ff40" opacity="0.30"/>
<rect x="631.0" y="203.0" width="1.0" height="45.0" fill="#20ff40" opacity="0.17"/>
<rect x="567.0" y="203.0" width="1.0" height="45.0" fill="#20ff40" opacity="0.20"/>
<rect x="639.0" y="203.0" width="2.0" height="45.0" fill="#20ff40" opacity="0.15"/>
<rect x="571.0" y="203.0" width="2.0" height="45.0" fill="#20ff40" opacity="0.23"/>
<rect x="614.0" y="203.0" width="1.0" height="45.0" fill="#20ff40" opacity="0.26"/>
<rect x="584.0" y="203.0" width="2.0" height="45.0" fill="#20ff40" opacity="0.22"/>
<rect x="590.0" y="203.0" width="2.0" height="45.0" fill="#20ff40" opacity="0.16"/>
<rect x="580.0" y="203.0" width="1.0" height="45.0" fill="#20ff40" opacity="0.16"/>
<rect x="583.0" y="203.0" width="1.0" height="45.0" fill="#20ff40" opacity="0.18"/>
</g>
</g>
<defs><linearGradient id="gcb" x1="0" y1="0" x2="0" y2="1"><stop offset="0" stop-color="#ff0000"/><stop offset="0.04" stop-color="#ff0800"/><stop offset="0.125" stop-color="#ff5000"/><stop offset="0.25" stop-color="#ffb000"/><stop offset="0.37" stop-color="#ffff00"/><stop offset="0.5" stop-color="#00ff00"/><stop offset="0.62" stop-color="#00ffff"/><stop offset="0.8" stop-color="#0000ff"/><stop offset="1" stop-color="#000000"/></linearGradient></defs>
<rect x="704" y="198" width="16" height="180" fill="url(#gcb)"/>
<g clip-path="url(#clp)"><path d="M220.1 546.8 L220.9 515.0 L221.7 511.8 L222.5 487.5 L223.3 521.7 L224.1 488.4 L224.9 505.0 L225.7 482.0 L226.5 504.7 L227.3 477.7 L228.1 496.1 L228.9 468.6 L229.7 490.6 L230.5 473.7 L231.3 486.1 L232.1 463.8 L232.9 483.3 L233.7 459.0 L234.5 495.3 L235.3 477.8 L236.1 492.4 L236.9 476.3 L237.7 499.1 L238.5 486.7 L239.3 502.6 L240.1 490.8 L240.9 512.2 L241.7 496.0 L242.5 515.8 L243.3 495.2 L244.1 537.6 L244.9 490.2 L245.7 525.9 L246.5 513.4 L247.3 542.5 L248.1 517.6 L248.9 541.6 L249.7 528.4 L250.5 548.7 L251.3 520.9 L252.1 548.2 L252.9 531.9 L253.7 562.5 L254.5 540.5 L255.3 556.8 L256.1 532.2 L256.9 573.5 L257.7 549.2 L258.5 567.1 L259.3 554.3 L260.1 563.8 L260.9 554.4 L261.7 571.9 L262.5 550.1 L263.3 562.4 L264.1 549.6 L264.9 563.5 L265.7 552.5 L266.5 569.8 L267.3 556.9 L268.1 566.7 L268.9 559.6 L269.7 571.6 L270.5 561.9 L271.3 578.5 L272.1 564.2 L272.9 580.2 L273.7 568.2 L274.5 575.0 L275.3 561.7 L276.1 577.7 L276.9 571.0 L277.7 580.5 L278.5 569.0 L279.3 577.8 L280.1 570.9 L280.9 578.4 L281.7 572.6 L282.5 579.5 L283.3 572.2 L284.1 577.9 L284.9 562.7 L285.7 588.5 L286.5 570.1 L287.3 577.2 L288.1 557.9 L288.9 574.2 L289.7 566.9 L290.5 575.5 L291.3 567.5 L292.1 575.6 L292.9 566.6 L293.7 578.1 L294.5 570.1 L295.3 579.1 L296.1 557.8 L296.9 575.5 L297.7 559.3 L298.5 571.6 L299.3 554.2 L300.1 577.4 L300.9 543.2 L301.7 559.7 L302.5 546.1 L303.3 561.5 L304.1 538.0 L304.9 551.6 L305.7 543.3 L306.5 563.2 L307.3 529.1 L308.1 552.7 L308.9 547.1 L309.7 559.5 L310.5 546.0 L311.3 561.0 L312.1 549.3 L312.9 567.8 L313.7 558.9 L314.5 566.1 L315.3 553.6 L316.1 571.6 L316.9 556.5 L317.7 562.1 L318.5 549.3 L319.3 562.8 L320.1 537.6 L320.9 558.7 L321.7 538.9 L322.5 546.8 L323.3 525.3 L324.1 534.7 L324.9 506.7 L325.7 533.7 L326.5 515.5 L327.3 534.4 L328.1 513.1 L328.9 523.5 L329.7 499.0 L330.5 519.0 L331.3 502.8 L332.1 533.6 L332.9 500.6 L333.7 527.3 L334.5 486.0 L335.3 487.5 L336.1 458.3 L336.9 482.2 L337.7 471.9 L338.5 493.7 L339.3 458.9 L340.1 500.5 L340.9 477.3 L341.7 492.6 L342.5 467.3 L343.3 493.4 L344.1 482.2 L344.9 493.5 L345.7 457.2 L346.5 498.8 L347.3 475.4 L348.1 501.9 L348.9 469.1 L349.7 511.6 L350.5 478.6 L351.3 508.2 L352.1 479.3 L352.9 501.0 L353.7 478.2 L354.5 505.0 L355.3 497.0 L356.1 515.8 L356.9 501.3 L357.7 522.1 L358.5 511.2 L359.3 550.4 L360.1 556.7 L360.9 574.5" fill="none" stroke="#000" stroke-width="1.25" stroke-linejoin="miter"/>
<path d="M372.9 550.7 L373.7 529.1 L374.5 514.2 L375.3 474.5 L376.1 496.6 L376.9 483.6 L377.7 507.3 L378.5 469.8 L379.3 497.1 L380.1 480.9 L380.9 500.6 L381.7 472.0 L382.5 493.4 L383.3 462.0 L384.1 499.9 L384.9 473.6 L385.7 495.9 L386.5 472.2 L387.3 492.4 L388.1 457.1 L388.9 481.2 L389.7 462.7 L390.5 488.5 L391.3 477.6 L392.1 505.5 L392.9 491.0 L393.7 511.1 L394.5 478.9 L395.3 490.2 L396.1 442.8 L396.9 482.4 L397.7 459.2 L398.5 499.6 L399.3 464.9 L400.1 492.0 L400.9 469.2 L401.7 492.2 L402.5 476.7 L403.3 496.7 L404.1 480.8 L404.9 513.2 L405.7 473.6 L406.5 514.6 L407.3 484.9 L408.1 500.5 L408.9 476.4 L409.7 500.5 L410.5 464.2 L411.3 488.2 L412.1 459.6 L412.9 489.4 L413.7 469.6 L414.5 491.3 L415.3 456.2 L416.1 487.3 L416.9 469.5 L417.7 493.1 L418.5 475.8 L419.3 514.5 L420.1 467.6 L420.9 513.2 L421.7 484.6 L422.5 501.4 L423.3 474.9 L424.1 500.9 L424.9 489.9 L425.7 505.3 L426.5 482.5 L427.3 511.8 L428.1 485.1 L428.9 513.4 L429.7 491.1 L430.5 511.9 L431.3 494.7 L432.1 508.7 L432.9 482.9 L433.7 513.0 L434.5 489.4 L435.3 514.3 L436.1 491.7 L436.9 511.3 L437.7 493.0 L438.5 514.2 L439.3 492.3 L440.1 513.4 L440.9 485.9 L441.7 533.4 L442.5 496.3 L443.3 514.5 L444.1 480.7 L444.9 513.1 L445.7 484.6 L446.5 515.2 L447.3 492.0 L448.1 523.4 L448.9 481.9 L449.7 517.6 L450.5 486.4 L451.3 508.1 L452.1 496.4 L452.9 516.2 L453.7 494.8 L454.5 506.7 L455.3 485.0 L456.1 509.5 L456.9 481.5 L457.7 498.3 L458.5 476.4 L459.3 496.6 L460.1 468.3 L460.9 497.7 L461.7 460.8 L462.5 507.5 L463.3 477.2 L464.1 510.2 L464.9 498.4 L465.7 514.9 L466.5 499.4 L467.3 523.5 L468.1 505.3 L468.9 517.8 L469.7 503.4 L470.5 530.2 L471.3 506.5 L472.1 536.3 L472.9 506.1 L473.7 530.6 L474.5 496.6 L475.3 513.5 L476.1 498.7 L476.9 509.6 L477.7 488.3 L478.5 503.8 L479.3 475.9 L480.1 516.8 L480.9 483.1 L481.7 516.4 L482.5 484.4 L483.3 509.4 L484.1 479.4 L484.9 528.0 L485.7 509.4 L486.5 532.7 L487.3 524.8 L488.1 543.1 L488.9 532.0 L489.7 543.8 L490.5 523.1 L491.3 542.2 L492.1 513.1 L492.9 525.3 L493.7 489.1 L494.5 513.6 L495.3 498.4 L496.1 518.3 L496.9 492.4 L497.7 516.2 L498.5 467.4 L499.3 502.5 L500.1 489.7 L500.9 510.2 L501.7 472.6 L502.5 516.1 L503.3 486.5 L504.1 509.1 L504.9 481.5 L505.7 500.7 L506.5 476.6 L507.3 523.4 L508.1 482.1 L508.9 493.4 L509.7 467.7 L510.5 494.8 L511.3 457.2 L512.1 492.4 L512.9 464.3 L513.7 490.7 L514.5 474.6 L515.3 495.1 L516.1 459.0 L516.9 496.8 L517.7 465.9 L518.5 489.1 L519.3 470.2 L520.1 487.1 L520.9 472.9 L521.7 491.3 L522.5 454.2 L523.3 496.9 L524.1 462.0 L524.9 492.8 L525.7 483.4 L526.2 485.2" fill="none" stroke="#000" stroke-width="1.25" stroke-linejoin="miter"/></g>
<g stroke="#000" stroke-width="1" fill="none" shape-rendering="crispEdges">
<path d="M219.5 197.5 H688.5 V377.5 H219.5 Z"/>
<path d="M214 344.5 H219"/>
<path d="M214 326.5 H219"/>
<path d="M214 313.5 H219"/>
<path d="M214 303.5 H219"/>
<path d="M214 295.5 H219"/>
<path d="M214 289.5 H219"/>
<path d="M214 283.5 H219"/>
<path d="M214 277.5 H219"/>
<path d="M214 242.5 H219"/>
<path d="M214 224.5 H219"/>
<path d="M214 212.5 H219"/>
<path d="M214 202.5 H219"/>
<path d="M208 273.5 H219"/>
<path d="M208 374.5 H219"/>
<path d="M220.5 377 V383"/>
<path d="M238.5 377 V389"/>
<path d="M256.5 377 V383"/>
<path d="M274.5 377 V383"/>
<path d="M292.5 377 V383"/>
<path d="M310.5 377 V383"/>
<path d="M328.5 377 V383"/>
<path d="M346.5 377 V383"/>
<path d="M364.5 377 V383"/>
<path d="M382.5 377 V383"/>
<path d="M400.5 377 V383"/>
<path d="M418.5 377 V383"/>
<path d="M436.5 377 V383"/>
<path d="M454.5 377 V389"/>
<path d="M472.5 377 V383"/>
<path d="M490.5 377 V383"/>
<path d="M508.5 377 V383"/>
<path d="M526.5 377 V383"/>
<path d="M544.5 377 V383"/>
<path d="M562.5 377 V383"/>
<path d="M580.5 377 V383"/>
<path d="M598.5 377 V383"/>
<path d="M616.5 377 V383"/>
<path d="M634.5 377 V383"/>
<path d="M652.5 377 V383"/>
<path d="M670.5 377 V389"/>
<path d="M688.5 377 V383"/>
<path d="M220.5 621 V627"/>
<path d="M238.5 621 V633"/>
<path d="M256.5 621 V627"/>
<path d="M274.5 621 V627"/>
<path d="M292.5 621 V627"/>
<path d="M310.5 621 V627"/>
<path d="M328.5 621 V627"/>
<path d="M346.5 621 V627"/>
<path d="M364.5 621 V627"/>
<path d="M382.5 621 V627"/>
<path d="M400.5 621 V627"/>
<path d="M418.5 621 V627"/>
<path d="M436.5 621 V627"/>
<path d="M454.5 621 V633"/>
<path d="M472.5 621 V627"/>
<path d="M490.5 621 V627"/>
<path d="M508.5 621 V627"/>
<path d="M526.5 621 V627"/>
<path d="M544.5 621 V627"/>
<path d="M562.5 621 V627"/>
<path d="M580.5 621 V627"/>
<path d="M598.5 621 V627"/>
<path d="M616.5 621 V627"/>
<path d="M634.5 621 V627"/>
<path d="M652.5 621 V627"/>
<path d="M670.5 621 V633"/>
<path d="M688.5 621 V627"/>
<path d="M720.5 198 V378"/>
<path d="M720 204.5 H726"/>
<path d="M720 217.5 H732"/>
<path d="M720 230.5 H726"/>
<path d="M720 244.5 H732"/>
<path d="M720 257.5 H726"/>
<path d="M720 270.5 H732"/>
<path d="M720 283.5 H726"/>
<path d="M720 297.5 H732"/>
<path d="M720 310.5 H726"/>
<path d="M720 323.5 H732"/>
<path d="M720 336.5 H726"/>
<path d="M720 350.5 H732"/>
<path d="M720 363.5 H726"/>
<path d="M720 376.5 H732"/>
<path d="M219.5 440.5 H688.5 V621.5 H219.5 Z"/>
<path d="M214 620.5 H219"/>
<path d="M208 599.5 H219"/>
<path d="M214 580.5 H219"/>
<path d="M208 561.5 H219"/>
<path d="M214 545.5 H219"/>
<path d="M208 529.5 H219"/>
<path d="M214 514.5 H219"/>
<path d="M208 500.5 H219"/>
<path d="M214 487.5 H219"/>
<path d="M208 474.5 H219"/>
<path d="M214 462.5 H219"/>
<path d="M208 451.5 H219"/>
</g>
<g fill="#000" stroke="#000" stroke-width="0.3" font-family="'DejaVu Sans Light','DejaVu Sans','Liberation Sans',sans-serif" font-weight="200">
<text x="454.4" y="187.0" font-size="16.0" text-anchor="middle" xml:space="preserve">RBSP-A/EMFISIS  HFR Spectra Data</text>
<text transform="translate(161,288.1) rotate(-90)" font-size="16.6" text-anchor="middle">Hz</text>
<text x="173.3" y="282.7" font-size="15.7" text-anchor="start" >10</text>
<text x="193.0" y="274.7" font-size="16.0" text-anchor="start" >5</text>
<text x="173.3" y="383.2" font-size="15.7" text-anchor="start" >10</text>
<text x="193.0" y="375.2" font-size="16.0" text-anchor="start" >4</text>
<text x="238.5" y="408.7" font-size="15.7" text-anchor="middle" >00:00</text>
<text x="455.6" y="409.1" font-size="15.7" text-anchor="middle" >12:00</text>
<text x="670.5" y="408.7" font-size="15.7" text-anchor="middle" >00:00</text>
<text x="216.5" y="425.0" font-size="15.7" text-anchor="start" >2012-12-02</text>
<text x="648.5" y="425.0" font-size="15.7" text-anchor="start" >2012-12-03</text>
<text x="294.1" y="414.3" font-size="16.1" text-anchor="start" xml:space="preserve">RBSP-A/ect-hope-L3  HOPE Moments Data</text>
<text x="736.3" y="226.9" font-size="15.7" text-anchor="start" >10</text>
<text x="756.3" y="218.9" font-size="16.0" text-anchor="start" >-10</text>
<text x="736.3" y="253.9" font-size="15.7" text-anchor="start" >10</text>
<text x="756.3" y="245.9" font-size="16.0" text-anchor="start" >-12</text>
<text x="736.3" y="280.4" font-size="15.7" text-anchor="start" >10</text>
<text x="756.3" y="272.4" font-size="16.0" text-anchor="start" >-14</text>
<text x="736.3" y="306.9" font-size="15.7" text-anchor="start" >10</text>
<text x="756.3" y="298.9" font-size="16.0" text-anchor="start" >-16</text>
<text x="736.3" y="333.4" font-size="15.7" text-anchor="start" >10</text>
<text x="756.3" y="325.4" font-size="16.0" text-anchor="start" >-18</text>
<text x="736.3" y="359.9" font-size="15.7" text-anchor="start" >10</text>
<text x="756.3" y="351.9" font-size="16.0" text-anchor="start" >-20</text>
<text x="736.3" y="386.4" font-size="15.7" text-anchor="start" >10</text>
<text x="756.3" y="378.4" font-size="16.0" text-anchor="start" >-22</text>
<text transform="translate(805.3,235.5) rotate(-90)" font-size="16.0" text-anchor="end">V<tspan dy="-6" font-size="12">2</tspan><tspan dy="6">/m</tspan><tspan dy="-6" font-size="12">2</tspan><tspan dy="6">/Hz</tspan></text>
<text x="203.3" y="456.9" font-size="15.7" text-anchor="end" >2.2</text>
<text x="203.3" y="480.2" font-size="15.7" text-anchor="end" >2.0</text>
<text x="203.3" y="506.0" font-size="15.7" text-anchor="end" >1.8</text>
<text x="203.3" y="534.9" font-size="15.7" text-anchor="end" >1.6</text>
<text x="203.3" y="567.5" font-size="15.7" text-anchor="end" >1.4</text>
<text x="203.3" y="605.3" font-size="15.7" text-anchor="end" >1.2</text>
<text transform="translate(166.5,531.4) rotate(-90)" font-size="15.28" text-anchor="middle">e Tperp/Tpar</text>
<text x="261.8" y="653.2" font-size="15.7" text-anchor="end" >00:00</text>
<text x="261.8" y="673.2" font-size="15.7" text-anchor="end" >4.225</text>
<text x="261.8" y="693.2" font-size="15.7" text-anchor="end" >-10.580</text>
<text x="261.8" y="713.2" font-size="15.7" text-anchor="end" >2.247</text>
<text x="261.8" y="733.2" font-size="15.7" text-anchor="end" >4.373</text>
<text x="477.8" y="653.2" font-size="15.7" text-anchor="end" >12:00</text>
<text x="477.8" y="673.2" font-size="15.7" text-anchor="end" >5.756</text>
<text x="477.8" y="693.2" font-size="15.7" text-anchor="end" >-1.544</text>
<text x="477.8" y="713.2" font-size="15.7" text-anchor="end" >5.398</text>
<text x="477.8" y="733.2" font-size="15.7" text-anchor="end" >5.760</text>
<text x="693.8" y="653.2" font-size="15.7" text-anchor="end" >00:00</text>
<text x="693.8" y="673.2" font-size="15.7" text-anchor="end" >3.502</text>
<text x="693.8" y="693.2" font-size="15.7" text-anchor="end" >-15.213</text>
<text x="693.8" y="713.2" font-size="15.7" text-anchor="end" >4.306</text>
<text x="693.8" y="733.2" font-size="15.7" text-anchor="end" >3.447</text>
<text x="175.3" y="673.2" font-size="16.0" text-anchor="end">R<tspan dy="4.6" font-size="9.4" font-family="DejaVu Sans,sans-serif" font-weight="400" stroke-width="0.1">E</tspan></text>
<text x="175.3" y="693.2" font-size="16.0" text-anchor="end" >MLat</text>
<text x="175.3" y="713.2" font-size="16.0" text-anchor="end" >MLT</text>
<text x="175.3" y="733.2" font-size="16.0" text-anchor="end" >L</text>
<text x="454.4" y="756.5" font-size="15.8" text-anchor="middle" >2012-12-01 (336) 23:00 to 2012-12-03 (338) 01:00</text>
</g>
</g>
</svg>

<!-- status bar -->
<div class="t r" style="left:126.5px;top:777px;font-size:9.6px;line-height:12px;color:#222;">plot_1 selected</div>

<!-- ================= DIALOG ================= -->
<div class="win" style="left:511px;top:244px;width:681px;height:470px;border-radius:4px 4px 0 0;border-color:#8c8c8c;background:#d9d9d9;"></div>
<div class="a" style="left:512px;top:245px;width:679px;height:25px;border-radius:3px 3px 0 0;background:linear-gradient(#fbfbfb 0px,#fbfbfb 1px,#e9e9e9 1.5px,#e3e3e3 40%,#d4d4d4 100%);"></div>
<svg class="a" style="left:1188px;top:244px" width="4" height="4"><path d="M4 0 H0 V1 H1.8 Q3 1 3 2.2 V4 H4 Z" fill="#0c1c44"/></svg>
<svg class="a" style="left:524px;top:254px" width="10" height="7"><path d="M0.3 0.5 L9.7 0.5 L5 6.5 Z" fill="#999"/></svg>
<div class="t" style="left:751px;top:252px;width:200px;text-align:center;color:#5e5e5e;letter-spacing:0.04px;font-size:13px;font-family:'DejaVu Sans Condensed','DejaVu Sans',sans-serif;" id="dlgtitle">Create PngWalk Options</div>
<svg class="a" style="left:1167px;top:252px" width="12" height="14"><path d="M2.5 4 L9.5 11 M9.5 4 L2.5 11" stroke="#f4f4f4" stroke-width="1.8" fill="none"/><path d="M2.5 3 L9.5 10 M9.5 3 L2.5 10" stroke="#909090" stroke-width="2" fill="none"/></svg>
<div class="a" style="left:514px;top:270px;width:675px;height:441px;background:#eee;"></div>

<div class="t" style="left:526px;top:283px;letter-spacing:0.34px">Output Folder:</div>
<div class="tf" style="left:538px;top:306px;width:537px;height:18px;"><div class="t" style="left:1px;top:2px;letter-spacing:0.15px">/home/jbf/tmp/pngwalk3</div></div>
<div class="btn" style="left:1082px;top:303px;width:62px;height:25px;"></div>
<div class="t" style="left:1082px;top:308px;width:62px;text-align:center;letter-spacing:0.07px">Pick</div>

<div class="cb" style="left:542px;top:335px;"></div>
<svg class="a" style="left:544px;top:337px" width="10" height="10"><path d="M0.7 3.3 L2.7 3.3 L3.1 5.5 L7.5 0.5 L8.3 1.0 L3.0 8.1 L2.2 8.1 Z" fill="#1a1a1a" stroke="#1a1a1a" stroke-width="0.5"/></svg>
<div class="a" style="left:558px;top:333px;width:72px;height:17px;border:1px solid #a3b8cc;"></div>
<div class="t" style="left:559px;top:335px;letter-spacing:0.24px">Overwrite</div>

<div class="t" style="left:526px;top:362px;letter-spacing:0.26px">Filename Root:</div>
<div class="tf" style="left:538px;top:382px;width:436px;height:18px;"><div class="t" style="left:1px;top:2px;letter-spacing:0.43px">product</div></div>
<div class="t" style="left:1000px;top:362px;letter-spacing:0.27px">Version (Optional):</div>
<div class="tf" style="left:1012px;top:382px;width:73px;height:18px;"></div>

<div class="t" style="left:526px;top:408px;letter-spacing:0.06px">Time Format:</div>
<div class="cbx" style="left:538px;top:428px;width:294px;height:24px;"></div>
<div class="t" style="left:540px;top:433px;letter-spacing:-0.06px" id="tfmt">$Y$m$d_$(H,delta=12)</div>
<div class="btn" style="left:831px;top:428px;width:20px;height:24px;"></div>
<svg class="a" style="left:835px;top:437px" width="12" height="7"><path d="M0.5 0.5 H11.5 L6 6.5 Z" fill="#222"/></svg>

<div class="t" style="left:1000px;top:408px;letter-spacing:0.24px">Rescale (Optional):</div>
<div class="cbx" style="left:1012px;top:428px;width:155px;height:24px;"></div>
<div class="t" style="left:1014px;top:433px;letter-spacing:-0.17px">0%,100%</div>
<div class="btn" style="left:1166px;top:428px;width:20px;height:24px;"></div>
<svg class="a" style="left:1170px;top:437px" width="12" height="7"><path d="M0.5 0.5 H11.5 L6 6.5 Z" fill="#222"/></svg>

<div class="cb" style="left:1004px;top:459px;"></div>
<div class="t" style="left:1021px;top:459px;letter-spacing:0.37px">Autorange Each</div>
<div class="cb dis" style="left:1016px;top:482px;"></div>
<svg class="a" style="left:1018px;top:484px" width="10" height="10"><path d="M0.7 3.3 L2.7 3.3 L3.1 5.5 L7.5 0.5 L8.3 1.0 L3.0 8.1 L2.2 8.1 Z" fill="#8493a2" stroke="#8493a2" stroke-width="0.4"/></svg>
<div class="t dis" style="left:1034px;top:482px;letter-spacing:0.30px">Check Autorange flag</div>
<div class="cb" style="left:1004px;top:507px;"></div>
<div class="t" style="left:1021px;top:507px;letter-spacing:0.49px">Update Sequence</div>
<div class="cb" style="left:1004px;top:530px;"></div>
<svg class="a" style="left:1006px;top:532px" width="10" height="10"><path d="M0.7 3.3 L2.7 3.3 L3.1 5.5 L7.5 0.5 L8.3 1.0 L3.0 8.1 L2.2 8.1 Z" fill="#1a1a1a" stroke="#1a1a1a" stroke-width="0.5"/></svg>
<div class="t" style="left:1021px;top:530px;letter-spacing:0.31px">Run in background</div>

<div class="rb" style="left:530px;top:482px;"></div>
<div class="a" style="left:533px;top:485px;width:6px;height:6px;border-radius:50%;background:#222;"></div>
<div class="t" style="left:547.3px;top:482px;letter-spacing:0.25px">Generate intervals to cover time range:</div>
<div class="tf" style="left:538px;top:507px;width:305px;height:18px;"><div class="t" style="left:1px;top:2px;letter-spacing:0.27px">2012-12</div></div>
<div class="btn" style="left:850px;top:502px;width:48px;height:24px;"></div>
<svg class="a" style="left:867px;top:507px" width="15" height="14">
<rect x="0.5" y="0.5" width="13" height="12.5" rx="1" fill="#fff" stroke="#4f86d6" stroke-width="1"/>
<rect x="1.6" y="1.6" width="10.8" height="2.6" fill="#f08a3c"/>
<path d="M1 6.5 H13 M1 9.5 H13 M4.5 4 V12 M7.5 4 V12 M10.5 4 V12" stroke="#6f94c9" stroke-width="1" fill="none"/>
<rect x="5" y="7" width="2.6" height="2.6" fill="#2e9b3d"/>
</svg>

<div class="rb" style="left:530px;top:538px;"></div>
<div class="t" style="left:547.2px;top:538px;letter-spacing:0.26px">Use events file that contains list of times:</div>
<div class="a" style="left:538px;top:557px;width:366px;height:27px;background:#fff;border:1px solid #b8cfe5;"></div>
<div class="t" style="left:540px;top:564px;color:#b0c9e3;letter-spacing:0.035px">file:///home/jbf/project/juno/u/masafumi/20181109//O</div>
<div class="btn dis" style="left:904px;top:557px;width:20px;height:27px;"></div>
<svg class="a" style="left:908px;top:567px" width="12" height="7"><path d="M0.5 0.5 H11.5 L6 6.5 Z" fill="#a9c6e2"/></svg>
<div class="btn dis" style="left:930px;top:557px;width:26px;height:27px;"></div>
<svg class="a" style="left:936px;top:563px" width="14" height="15"><path d="M1.5 1.5 L12 7.5 L1.5 13.5 Z" fill="#c4c4c4" stroke="#b0b0b0" stroke-width="1"/></svg>
<div class="btn dis" style="left:962px;top:557px;width:26px;height:27px;"></div>
<svg class="a" style="left:966px;top:562px" width="18" height="17">
<path d="M1.5 4.5 h5 l1.5 1.5 h6.5 v8.5 h-13 z" fill="#cfcfcf" stroke="#b8b8b8" stroke-width="1"/>
<path d="M3.5 8.5 h12.5 l-2 6 h-12.5 z" fill="#dcdcdc" stroke="#b8b8b8" stroke-width="1"/>
<circle cx="12.5" cy="4.5" r="3.3" fill="#d6d6d6" stroke="#c0c0c0" stroke-width="1"/>
</svg>

<div class="cb dis" style="left:542px;top:592px;"></div>
<div class="t dis" style="left:559px;top:592px;letter-spacing:0.24px">Events file specifies product names</div>

<div class="cb" style="left:530px;top:615px;"></div>
<svg class="a" style="left:532px;top:617px" width="10" height="10"><path d="M0.7 3.3 L2.7 3.3 L3.1 5.5 L7.5 0.5 L8.3 1.0 L3.0 8.1 L2.2 8.1 Z" fill="#1a1a1a" stroke="#1a1a1a" stroke-width="0.5"/></svg>
<div class="t" style="left:548px;top:615px;letter-spacing:0.29px">Create Thumbs</div>
<div class="t" style="left:693px;top:615px;letter-spacing:0.27px">Output Format:</div>
<div class="rb" style="left:814px;top:615px;"></div>
<div class="a" style="left:817px;top:618px;width:6px;height:6px;border-radius:50%;background:#222;"></div>
<div class="t" style="left:831px;top:615px">PNG</div>
<div class="rb" style="left:868px;top:615px;"></div>
<div class="t" style="left:885px;top:615px;letter-spacing:0.08px">PDF</div>

<div class="btn" style="left:1040px;top:686px;width:81px;height:25px;"></div>
<div class="t" style="left:1040px;top:692px;width:81px;text-align:center;letter-spacing:0.30px">Cancel</div>
<div class="btn" style="left:1129px;top:687px;width:52px;height:23px;border-color:#7a8a99;box-shadow:0 0 0 1px #b8cfe5, inset 0 0 0 1px #b8cfe5;"></div>
<div class="t" style="left:1130px;top:692px;width:53px;text-align:center;letter-spacing:0.4px">OK</div>

<!-- mouse cursor -->
<svg class="a" style="left:1132px;top:682px" width="44" height="60" viewBox="0 0 44 60">
<defs><linearGradient id="gcur" x1="0" y1="0" x2="1" y2="1"><stop offset="0.35" stop-color="#ffffff"/><stop offset="1" stop-color="#cfcfcf"/></linearGradient></defs>
<path d="M7.8 8.8 L7.8 38 L17.6 32.6 L26.9 51.4 L35.5 46.6 L27.2 29.3 L33.3 24.6 Z" fill="url(#gcur)" stroke="#1a1a1a" stroke-width="3.3" stroke-linejoin="round"/>
</svg>


</body>
</html>
